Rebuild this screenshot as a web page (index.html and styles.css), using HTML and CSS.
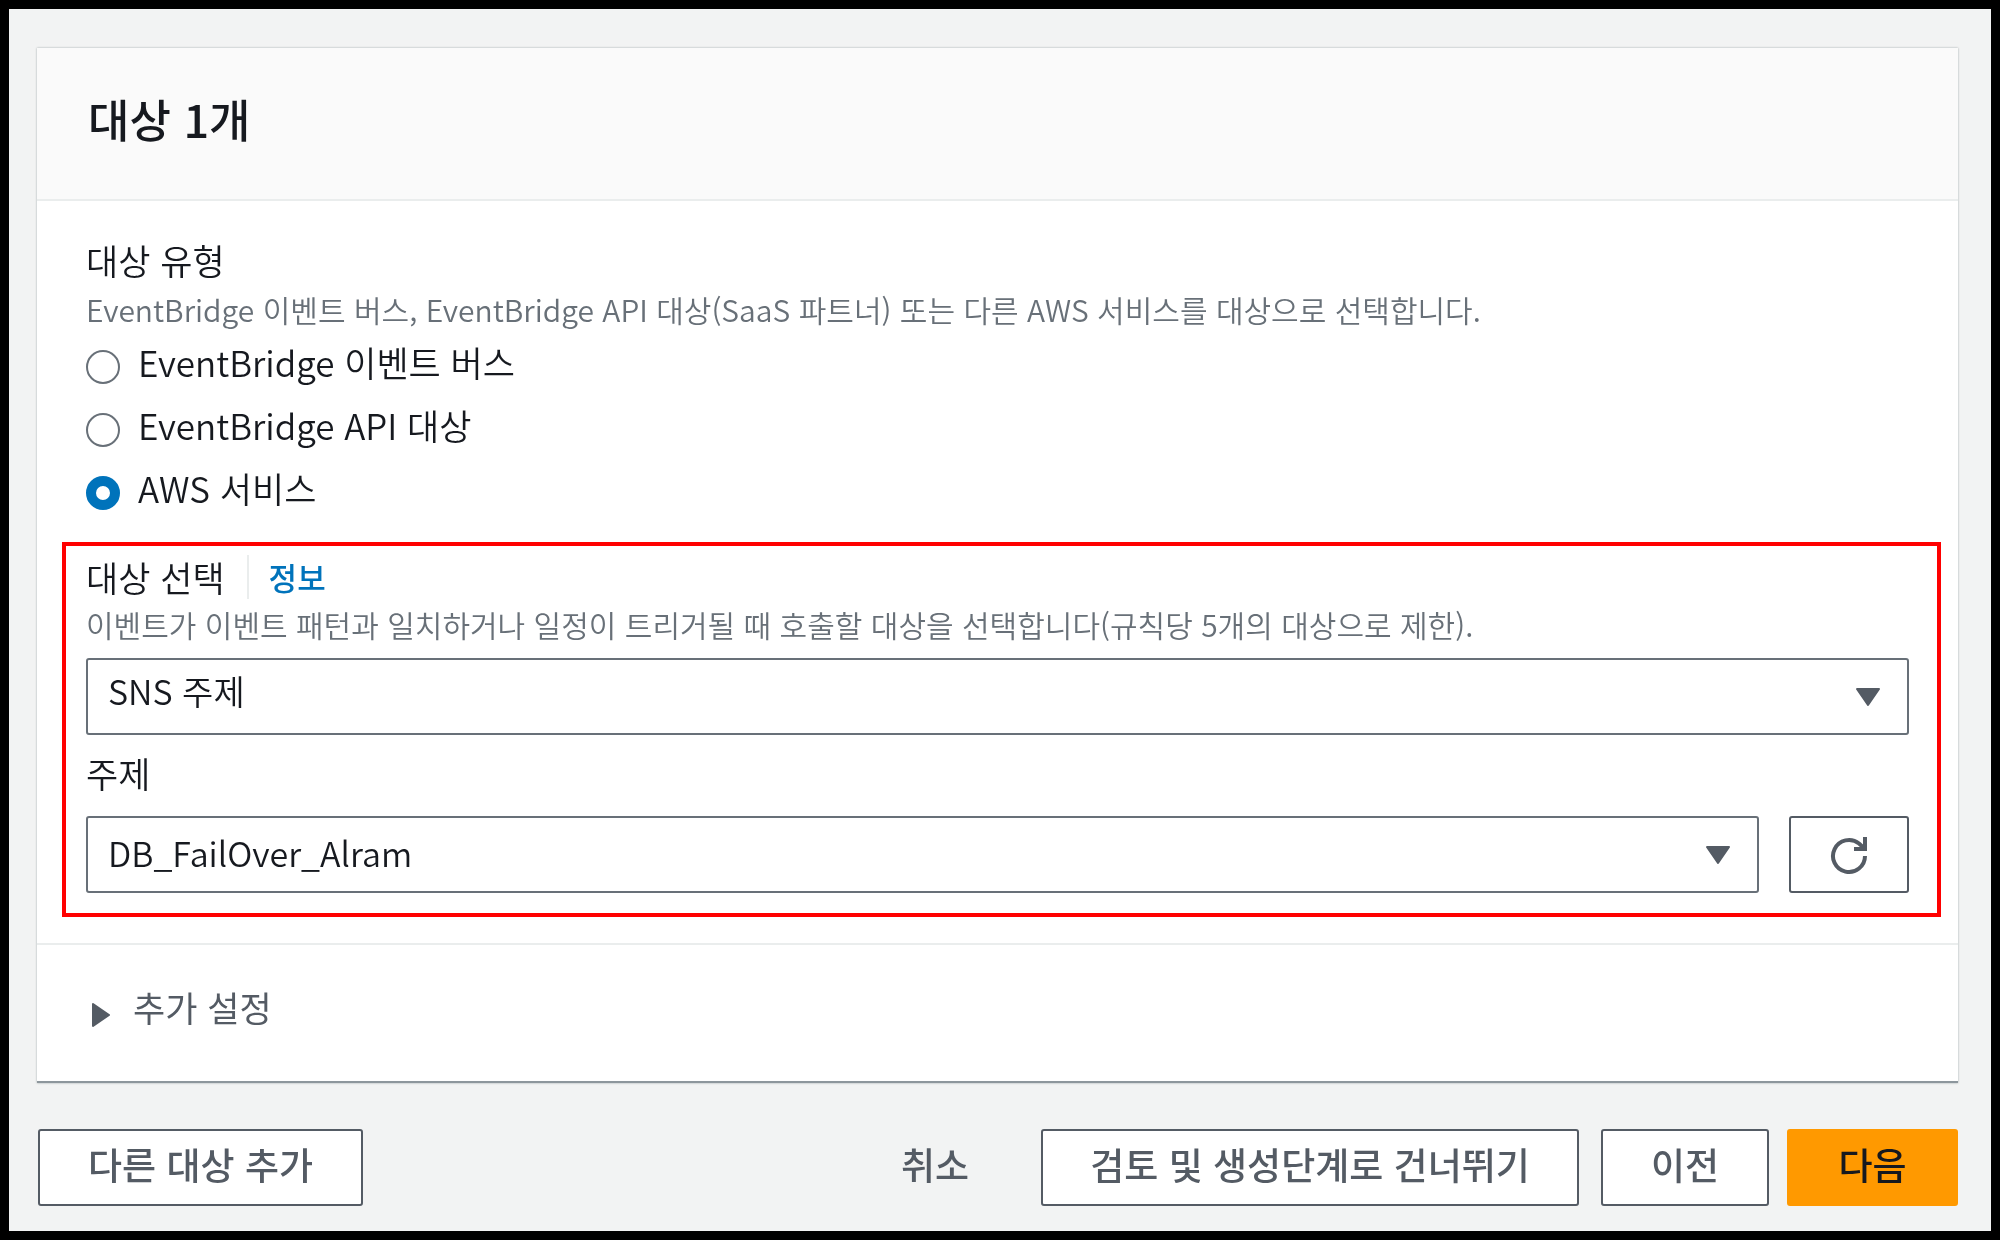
FILE: index.html
```html
<!DOCTYPE html>
<html lang="ko">
<head>
<meta charset="utf-8">
<title>대상 1개</title>
<link rel="stylesheet" href="styles.css">
</head>
<body>
<main class="frame">
  <section class="card">
    <header class="card-head"><h2>대상 1개</h2></header>
    <div class="type-block">
      <div class="label">대상 유형</div>
      <div class="desc type-desc">EventBridge 이벤트 버스, EventBridge API 대상(SaaS 파트너) 또는 다른 AWS 서비스를 대상으로 선택합니다.</div>
      <div class="radios">
        <div class="radio-row"><span class="radio"></span><span class="radio-text">EventBridge 이벤트 버스</span></div>
        <div class="radio-row"><span class="radio"></span><span class="radio-text">EventBridge API 대상</span></div>
        <div class="radio-row"><span class="radio on"></span><span class="radio-text">AWS 서비스</span></div>
      </div>
    </div>
    <div class="highlight">
      <div class="label-row"><span class="label">대상 선택</span><span class="info">정보</span></div>
      <div class="desc target-desc">이벤트가 이벤트 패턴과 일치하거나 일정이 트리거될 때 호출할 대상을 선택합니다(규칙당 5개의 대상으로 제한).</div>
      <div class="select first"><span class="select-text up">SNS 주제</span><svg class="caret" viewBox="0 0 26 20"><path d="M2 2h22L13 18z"/></svg></div>
      <div class="label sub">주제</div>
      <div class="topic-row">
        <div class="select grow"><span class="select-text nudge">DB_FailOver_Alram</span><svg class="caret" viewBox="0 0 26 20"><path d="M2 2h22L13 18z"/></svg></div>
        <button class="refresh" type="button" aria-label="새로 고침"><svg viewBox="0 0 42 42"><path d="M37 22a16 16 0 1 1-6-12.500l5 4.500"/><path d="M37 3v12H26"/></svg></button>
      </div>
    </div>
    <div class="extra"><svg class="tri" viewBox="0 0 20 26"><path d="M2 2l16 11L2 24z"/></svg><span>추가 설정</span></div>
  </section>
  <footer class="actions">
    <button class="btn add" type="button">다른 대상 추가</button>
    <span class="spacer"></span>
    <button class="link" type="button">취소</button>
    <button class="btn skip" type="button">검토 및 생성단계로 건너뛰기</button>
    <button class="btn prev" type="button">이전</button>
    <button class="btn primary" type="button">다음</button>
  </footer>
</main>
</body>
</html>
```
FILE: styles.css
```css
* { box-sizing: border-box; }
html, body { margin: 0; padding: 0; }
body {
  width: 2000px;
  height: 1240px;
  background: #000;
  font-family: "Noto Sans CJK KR", "Noto Sans", sans-serif;
  overflow: hidden;
}
.frame {
  margin: 9px;
  width: 1982px;
  height: 1222px;
  background: #f2f3f3;
  padding: 39px 32px 0 28px;
  filter: blur(0.7px);
}
.card {
  width: 1921px;
  height: 1035px;
  background: #fff;
  border-bottom: 2px solid #8d969c;
  box-shadow: 0 0 2px rgba(0, 28, 36, .35);
}
.card-head {
  height: 153px;
  background: #fafafa;
  border-bottom: 2px solid #eaeded;
  padding: 0 51px;
  display: flex;
  align-items: center;
}
.card-head h2 {
  margin: -10px 0 0;
  font-size: 45px;
  line-height: 60px;
  font-weight: 500;
  color: #16191f;
}
.type-block { padding: 36px 49px 0; height: 341px; }
.label {
  font-size: 35px;
  line-height: 46px;
  color: #16191f;
  font-weight: 350;
}
.desc {
  font-size: 30px;
  line-height: 40px;
  color: #687078;
  white-space: nowrap;
  font-weight: 350;
}
.type-desc { margin-top: 6px; }
.target-desc { margin-top: 4px; }
.radios { margin-top: 10px; display: flex; flex-direction: column; gap: 17px; }
.radio-row { display: flex; align-items: center; height: 46px; }
.radio {
  width: 34px;
  height: 34px;
  border: 2px solid #687078;
  border-radius: 50%;
  background: #fff;
  margin-top: 10px;
  flex: none;
}
.radio.on { border: 10px solid #0073bb; }
.radio-text {
  margin-left: 18px;
  font-size: 35px;
  line-height: 46px;
  color: #16191f;
  font-weight: 350;
}
.highlight {
  margin: 0 0 0 25px;
  width: 1879px;
  height: 375px;
  border: 4px solid #f00;
  padding: 8px 28px 0 20px;
}
.label-row { display: flex; align-items: center; height: 46px; }
.info {
  margin-left: 22px;
  padding-left: 20px;
  border-left: 2px solid #eaeded;
  color: #0073bb;
  font-size: 31px;
  line-height: 44px;
  font-weight: 500;
}
.select {
  height: 77px;
  border: 2px solid #687078;
  border-radius: 3px;
  background: #fff;
  display: flex;
  align-items: center;
  justify-content: space-between;
  padding: 0 26px 0 20px;
}
.first { margin-top: 14px; }
.select-text {
  font-size: 34px;
  line-height: 46px;
  color: #16191f;
  font-weight: 350;
}
.select-text.up { margin-top: -12px; }
.select-text.nudge { margin-top: -4px; }
.caret { width: 26px; height: 20px; fill: #545b64; stroke: #545b64; stroke-width: 2; stroke-linejoin: round; }
.label.sub { margin-top: 15px; height: 46px; }
.topic-row { display: flex; gap: 30px; margin-top: 20px; }
.grow { flex: 1; }
.refresh {
  width: 120px;
  height: 77px;
  flex: none;
  padding: 0;
  border: 2px solid #545b64;
  border-radius: 3px;
  background: #fff;
  display: flex;
  align-items: center;
  justify-content: center;
}
.refresh svg {
  width: 42px;
  height: 42px;
  fill: none;
  stroke: #545b64;
  stroke-width: 4;
}
.extra {
  margin-top: 26px;
  border-top: 2px solid #eaeded;
  height: 138px;
  padding: 39px 0 0 54px;
  display: flex;
  align-items: flex-start;
  color: #545b64;
  font-size: 35px;
  line-height: 46px;
  font-weight: 400;
}
.tri { width: 20px; height: 26px; fill: #545b64; stroke: #545b64; stroke-width: 2; stroke-linejoin: round; margin: 18px 22px 0 0; flex: none; }
.actions {
  display: flex;
  align-items: center;
  margin-top: 46px;
  margin-left: 1px;
  width: 1920px;
  height: 77px;
}
.spacer { flex: 1; }
.btn {
  height: 77px;
  border: 2px solid #545b64;
  border-radius: 3px;
  background: #fff;
  color: #545b64;
  font: 500 37px/46px "Noto Sans CJK KR", "Noto Sans", sans-serif;
  padding: 0 0 8px;
}
.add { width: 325px; }
.link {
  border: 0;
  background: none;
  color: #545b64;
  font: 500 37px/46px "Noto Sans CJK KR", "Noto Sans", sans-serif;
  padding: 0 0 8px;
  margin-right: 72px;
}
.skip { width: 538px; }
.prev { width: 168px; margin-left: 22px; }
.primary {
  width: 171px;
  margin-left: 18px;
  background: #f90;
  border-color: #f90;
  color: #16191f;
}
```
